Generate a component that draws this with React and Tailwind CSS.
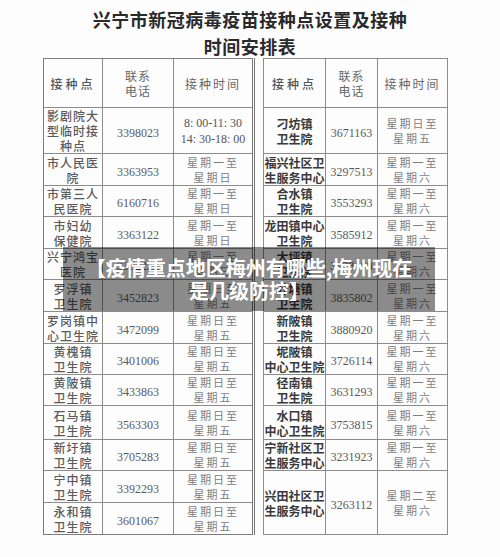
const cjk = "font-['Noto_Sans_CJK_SC','Noto_Sans',sans-serif]"
const serif = "font-['Liberation_Serif','Noto_Sans_CJK_SC',serif]"

const SUN_FRI = ['星期日至', '星期五']
const MON_SUN = ['星期一至', '星期日']
const MON_SAT = ['星期一至', '星期六']

// left half of the printed sheet
const leftRows = [
  { h: 'h-[46px]', name: ['影剧院大', '型临时接', '种点'], tel: '3398023', time: ['8: 00-11: 30', '14: 30-18: 00'], clock: true },
  { h: 'h-[32px]', name: ['市人民医', '院'], tel: '3363953', time: MON_SUN },
  { h: 'h-[30px]', name: ['市第三人', '民医院'], tel: '6160716', time: MON_SUN },
  { h: 'h-[32px]', name: ['市妇幼', '保健院'], tel: '3363122', time: MON_SUN },
  { h: 'h-[31px]', name: ['兴宁鸿宝', '医院'], tel: '3362222', time: MON_SUN },
  { h: 'h-[32px]', name: ['罗浮镇', '卫生院'], tel: '3452823', time: SUN_FRI },
  { h: 'h-[32px]', name: ['罗岗镇中', '心卫生院'], tel: '3472099', time: SUN_FRI },
  { h: 'h-[30px]', name: ['黄槐镇', '卫生院'], tel: '3401006', time: SUN_FRI },
  { h: 'h-[31px]', name: ['黄陂镇', '卫生院'], tel: '3433863', time: SUN_FRI },
  { h: 'h-[34px]', name: ['石马镇', '卫生院'], tel: '3563303', time: SUN_FRI },
  { h: 'h-[31px]', name: ['新圩镇', '卫生院'], tel: '3705283', time: SUN_FRI },
  { h: 'h-[32px]', name: ['宁中镇', '卫生院'], tel: '3392293', time: SUN_FRI },
  { h: 'h-[32px]', name: ['永和镇', '卫生院'], tel: '3601067', time: SUN_FRI },
]

// right half, last one spans two rows
const rightRows = [
  { h: 'h-[46px]', name: ['刁坊镇', '卫生院'], tel: '3671163', time: SUN_FRI },
  { h: 'h-[32px]', name: ['福兴社区卫', '生服务中心'], tel: '3297513', time: MON_SAT },
  { h: 'h-[30px]', name: ['合水镇', '卫生院'], tel: '3553293', time: MON_SAT },
  { h: 'h-[32px]', name: ['龙田镇中心', '卫生院'], tel: '3585912', time: MON_SAT },
  { h: 'h-[31px]', name: ['大坪镇', '卫生院'], tel: '3628168', time: MON_SAT },
  { h: 'h-[32px]', name: ['叶塘镇', '卫生院'], tel: '3835802', time: MON_SAT },
  { h: 'h-[32px]', name: ['新陂镇', '卫生院'], tel: '3880920', time: MON_SAT },
  { h: 'h-[30px]', name: ['坭陂镇', '中心卫生院'], tel: '3726114', time: MON_SAT },
  { h: 'h-[31px]', name: ['径南镇', '卫生院'], tel: '3631293', time: MON_SAT },
  { h: 'h-[34px]', name: ['水口镇', '中心卫生院'], tel: '3753815', time: MON_SAT },
  { h: 'h-[31px]', name: ['宁新社区卫', '生服务中心'], tel: '3231923', time: MON_SAT },
  { h: 'h-[64px]', name: ['兴田社区卫', '生服务中心'], tel: '3263112', time: ['星期二至', '星期六'], span: 2 },
]

function Lines({ items, className }) {
  return (
    <div className={className}>
      {items.map((t, i) => (
        <div key={i}>{t}</div>
      ))}
    </div>
  )
}

function Header() {
  return (
    <tr className="h-[49px]">
      <td className="border border-[#8c8c8c] text-center">
        <span className={`${cjk} text-[12px] tracking-[3px] text-[#555] font-medium`}>接种点</span>
      </td>
      <td className="border border-[#8c8c8c] text-center">
        <Lines items={['联系', '电话']} className={`${cjk} text-[12px] leading-[15px] tracking-[1px] text-[#666]`} />
      </td>
      <td className="border border-[#8c8c8c] text-center">
        <span className={`${cjk} text-[12px] tracking-[2px] text-[#666]`}>接种时间</span>
      </td>
    </tr>
  )
}

function Sheet({ rows, widths, bold, last }) {
  return (
    <table
      className={`table-fixed border-collapse border-[#7c7c7c] border ${last ? '' : 'border-r-[3px] border-r-[#777] border-double'}`}
      style={{ width: widths.reduce((a, b) => a + b, 0) }}
    >
      <colgroup>
        {widths.map((w, i) => (
          <col key={i} style={{ width: w }} />
        ))}
      </colgroup>
      <tbody>
        <Header />
        {rows.map((r, i) => (
          <tr key={i} className={r.span ? 'h-[32px]' : r.h}>
            <td rowSpan={r.span} className={`border border-[#8c8c8c] text-center align-middle ${r.span ? 'h-[64px]' : ''}`}>
              <Lines
                items={r.name}
                className={`${cjk} text-[12px] leading-[15px] ${bold ? 'font-semibold text-[#3a3a3a] tracking-[0px]' : 'font-medium text-[#5a5a5a] tracking-[1px]'} whitespace-nowrap`}
              />
            </td>
            <td rowSpan={r.span} className="border border-[#8c8c8c] text-center align-middle">
              <span className={`${serif} text-[12px] text-[#5a5a5a]`}>{r.tel}</span>
            </td>
            <td rowSpan={r.span} className="border border-[#8c8c8c] text-center align-middle">
              {r.clock ? (
                <Lines items={r.time} className={`${serif} text-[12px] leading-[16px] text-[#555] whitespace-nowrap`} />
              ) : (
                <Lines items={r.time} className={`${cjk} text-[11px] leading-[15px] tracking-[2px] text-[#808080] whitespace-nowrap`} />
              )}
            </td>
          </tr>
        ))}
        {rows.some((r) => r.span) && <tr className="h-[32px]" />}
      </tbody>
    </table>
  )
}

export default function App() {
  return (
    <div className="relative w-[500px] h-[557px] overflow-hidden bg-[#fdfdfd]">
      {/* title */}
      <div className={`${cjk} pt-[6px] text-center text-[18px] leading-[27px] font-bold text-[#2a2a2a] tracking-[0.5px]`}>
        <div>兴宁市新冠病毒疫苗接种点设置及接种</div>
        <div>时间安排表</div>
      </div>

      <div className="mt-[-2px] flex items-start pl-[43px] gap-[8px]">
        <Sheet rows={leftRows} widths={[59, 71, 80]} />
        <Sheet rows={rightRows} widths={[62, 52, 70]} bold last />
      </div>

      {/* caption overlay */}
      <div className="absolute left-[63px] top-[247px] w-[372px] h-[64px] bg-black/45 flex items-center justify-center">
        <p className={`${cjk} text-center text-white font-bold text-[20px] leading-[23px]`}>
          【疫情重点地区梅州有哪些,梅州现在
          <br />
          是几级防控】
        </p>
      </div>
    </div>
  )
}
